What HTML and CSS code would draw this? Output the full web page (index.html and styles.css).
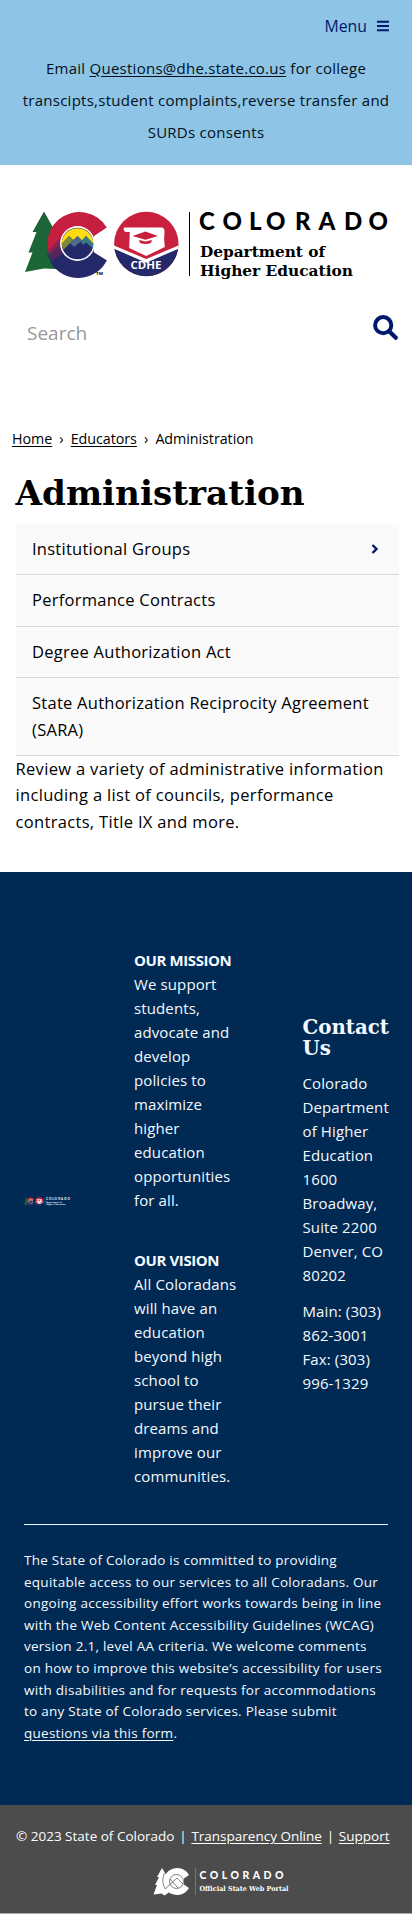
FILE: index.html
```html
<!DOCTYPE html>
<html lang="en">
<head>
<meta charset="utf-8">
<meta name="viewport" content="width=device-width">
<title>Administration</title>
<link rel="stylesheet" href="styles.css">
</head>
<body>
<div class="topbar">
  <div class="menu">Menu
    <svg class="burger" viewBox="0 0 12 12"><path d="M0 1.700h12M0 6h12M0 10.300h12" stroke="currentColor" stroke-width="2"/></svg>
  </div>
  <p class="notice"><span class="line">Email <a href="#">Questions@dhe.state.co.us</a> for college</span><span class="line">transcipts,student complaints,reverse transfer and</span><span class="line">SURDs consents</span></p>
</div>
<header class="header">
  <svg class="logo" viewBox="24 210 365 70">
    <defs>
      <g id="brand">
        <path d="M44 211.500L32.500 232h4l-8 20.500h4L25 272l19-3.500L80 270 60 240z" fill="#1b6537"/>
        <path d="M106.800 227.500A32 32 0 1 0 106.800 260.500L94 252.500V236z" fill="#c41f3e"/>
        <path d="M50.500 262A32 32 0 0 0 106.800 260.500L94 252.500H64z" fill="#24296a"/>
        <path d="M46 253l17-18 7 17-17 15z" fill="#24296a" opacity=".35"/>
        <path d="M48 256l10-10 6 6-12 12z" fill="#24296a" opacity=".55"/>
        <circle cx="77.500" cy="243.500" r="17.400" fill="#fff"/>
        <circle cx="77.500" cy="243.500" r="15.800" fill="#24296a"/>
        <path d="M61.700 244A15.800 15.800 0 0 1 93.300 244L86 236l-4 4.500-4.500-4.500-4 4-4.500-4z" fill="#ffdc10"/>
        <path d="M61.800 243.500L69 236l4.500 4-10.500 10z" fill="#7f8a38"/>
        <path d="M81 241.500l5-5.500 7.200 7.500-.2 5-7-6-3 2.500z" fill="#377b87"/>
        <path d="M70 243.500l7.500-7.500 5 5-5 3-3 3z" fill="#4d6a8b"/>
        <circle cx="146.300" cy="243.900" r="32.200" fill="#c9203e"/>
        <path d="M114.200 246.500l32 15.500 32.200-15.500A32.200 32.200 0 0 1 114.200 246.500z" fill="#24296a"/>
        <path d="M114 245.500l32.200 13.500 32.300-13.500v3.200l-32.300 14-32.200-14z" fill="#fff"/>
        <path d="M126 227.500h35.500q3 0 3 4-1 8 .3 15.500l-18.600 9-17-8 .6-16h-4.500q-3-3-1-4.500z" fill="#fff"/>
        <path d="M132.500 236l13-4.500 12.500 4.500-12.500 3.800zM139 240l6.500 1.500 6.500-1.500-1 3q-5.500 2-11 0z" fill="#c9203e"/>
        <text x="130.500" y="268.500" textLength="31" lengthAdjust="spacingAndGlyphs" class="seal">CDHE</text>
        <text x="96" y="275" textLength="7" lengthAdjust="spacingAndGlyphs" class="tm">TM</text>
        <path d="M189.500 212v64" stroke="currentColor"/>
        <text x="199 222.500 249 266 295 318.500 344 368.500" y="229.700" class="state">COLORADO</text>
        <text x="200" y="257" textLength="125" lengthAdjust="spacingAndGlyphs" class="dept">Department of</text>
        <text x="200" y="275.500" textLength="153" lengthAdjust="spacingAndGlyphs" class="dept">Higher Education</text>
      </g>
    </defs>
    <use href="#brand"/>
  </svg>
  <div class="search">
    <span class="placeholder">Search</span>
    <svg class="glass" viewBox="0 0 25 25"><circle cx="10.200" cy="10.200" r="8.100" fill="none" stroke="currentColor" stroke-width="4"/><path d="M16.200 16.200l6.600 6.600" stroke="currentColor" stroke-width="4.200" stroke-linecap="round"/></svg>
  </div>
</header>
<nav class="crumbs"><a href="#">Home</a><span class="sep">›</span><a href="#">Educators</a><span class="sep">›</span><span>Administration</span></nav>
<main>
  <h1>Administration</h1>
  <ul class="subnav">
    <li>Institutional Groups<svg class="chev" viewBox="0 0 8 10"><path d="M1.500 1l4 4-4 4" fill="none" stroke="currentColor" stroke-width="2.400"/></svg></li>
    <li>Performance Contracts</li>
    <li>Degree Authorization Act</li>
    <li><span>State Authorization Reciprocity Agreement<br>(SARA)</span></li>
  </ul>
  <p class="intro">Review a variety of administrative information<br>including a list of councils, performance<br>contracts, Title IX and more.</p>
</main>
<footer>
  <div class="about">
    <svg class="minilogo" viewBox="24 210 365 70"><use href="#brand"/></svg>
    <div class="mission">
      <p><b>OUR MISSION</b><br>We support<br>students,<br>advocate and<br>develop<br>policies to<br>maximize<br>higher<br>education<br>opportunities<br>for all.</p>
      <p><b>OUR VISION</b><br>All Coloradans<br>will have an<br>education<br>beyond high<br>school to<br>pursue their<br>dreams and<br>improve our<br>communities.</p>
    </div>
    <div class="contact">
      <h2>Contact<br>Us</h2>
      <p>Colorado<br>Department<br>of Higher<br>Education<br>1600<br>Broadway,<br>Suite 2200<br>Denver, CO<br>80202</p>
      <p>Main: (303)<br>862-3001<br>Fax: (303)<br>996-1329</p>
    </div>
  </div>
  <p class="access">The State of Colorado is committed to providing<br>equitable access to our services to all Coloradans. Our<br>ongoing accessibility effort works towards being in line<br>with the Web Content Accessibility Guidelines (WCAG)<br>version 2.1, level AA criteria. We welcome comments<br>on how to improve this website’s accessibility for users<br>with disabilities and for requests for accommodations<br>to any State of Colorado services. Please submit<br><a href="#">questions via this form</a>.</p>
</footer>
<div class="legal">
  <div class="links"><span>© 2023 State of Colorado</span><span>|</span><a href="#">Transparency Online</a><span>|</span><a href="#">Support</a></div>
  <svg class="portal" viewBox="152 1866 137 31">
    <path d="M161 1868l-5 9h2l-4 8h2l-3.500 9.500 8-1 3 2 10-7z" fill="#fff"/>
    <path d="M188 1875A13.500 13.500 0 1 0 188 1888l-5-3.500v-6z" fill="#fff"/>
    <g fill="none" stroke="#4c4c4c" stroke-width=".7"><circle cx="175.500" cy="1881.500" r="7"/><path d="M163.500 1873q-4 9 1 16M164 1889l12-11 6 6M169 1879l8 9"/></g>
    <path d="M194.500 1868v27" stroke="#888" stroke-width=".7"/>
    <text x="198.500" y="1879.300" textLength="84" class="ptitle">COLORADO</text>
    <text x="198.500" y="1891" textLength="89" lengthAdjust="spacingAndGlyphs" class="psub">Official State Web Portal</text>
  </svg>
</div>
</body>
</html>
```
FILE: styles.css
```css
* { box-sizing: border-box; }
body { margin: 0; background: #fff; color: #000; font-family: "Trebuchet MS", "Open Sans", sans-serif; white-space: nowrap; }
p, h1, h2, ul { margin: 0; padding: 0; }
a { color: inherit; text-decoration: underline; text-underline-offset: 2px; }
svg { display: block; overflow: visible; }

.topbar { height: 165px; background: #8ec4e5; padding-top: 11px; color: #02101c; }
.menu { display: flex; justify-content: flex-end; align-items: center; gap: 10px; height: 30px; padding-right: 23px; color: #001970; font-size: 15.800px; }
.burger { width: 12px; height: 12px; }
.notice { margin-top: 11px; font-size: 15px; line-height: 32px; text-align: center; letter-spacing: .26px; }
.line { display: block; }

.header { height: 254px; padding: 45px 24px 0; }
.logo { width: 365px; height: 70px; color: #000; }
.seal { font: 700 10.500px "Open Sans", sans-serif; fill: #fff; }
.tm { font: 700 4px "Open Sans", sans-serif; }
.state { font: 900 24px Lato, sans-serif; fill: currentColor; }
.dept { font: 700 15.500px "DejaVu Serif", serif; fill: currentColor; }
.search { display: flex; justify-content: space-between; padding-top: 35px; margin-right: -9.500px; }
.placeholder { padding-left: 3px; margin-top: 3px; font-size: 19px; line-height: 30px; color: #979797; }
.glass { width: 25px; height: 25px; color: #001970; }

.crumbs { display: flex; height: 42px; padding: 8px 12px; font-size: 14.300px; line-height: 24px; letter-spacing: -.05px; }
.sep { width: 18.500px; text-align: center; }
main { height: 411px; padding: 8px 13px 0 15.500px; }
h1 { height: 55px; font: 700 34.200px/48px "DejaVu Serif", serif; }
.subnav { list-style: none; letter-spacing: .26px; }
.subnav li { display: flex; align-items: center; justify-content: space-between; height: 51.500px; padding: 0 20px 0 16.500px; background: #fafafa; border-bottom: 1px solid #d8d8d8; font-size: 16.500px; line-height: 26.400px; }
.subnav li:first-child { height: 51px; }
.subnav li:last-child { height: 78px; }
.chev { width: 8px; height: 10px; color: #001970; }
.intro { font-size: 16.500px; line-height: 26.400px; letter-spacing: .33px; }

footer { height: 933px; background: #002a54; color: #f4f9ff; padding: 76px 24px 0; }
.about { display: grid; grid-template-columns: 110px 168.500px 1fr; align-items: center; height: 577px; border-bottom: 1px solid #e8f4ff; font-size: 15px; line-height: 24px; letter-spacing: .12px; padding-bottom: 36px; }
.minilogo { width: 46px; height: 9px; margin-top: -34px; }
.mission { align-self: start; }
.mission b { letter-spacing: -.4px; }
.mission p + p { margin-top: 36px; }
.contact { align-self: start; padding-top: 69px; }
h2 { margin-bottom: 12px; font: 700 19.800px/21px "DejaVu Serif", serif; letter-spacing: 0; }
.contact p + p { margin-top: 12px; }
.access { padding-top: 25px; font-size: 13.500px; line-height: 21.600px; letter-spacing: .26px; }

.legal { height: 109px; background: #4c4c4c; color: #fff; padding-top: 19px; border-bottom: 1px solid #aaa; }
.links { display: flex; justify-content: space-between; padding: 0 22.500px 0 16px; font-size: 13.500px; line-height: 24px; }
.portal { width: 137px; height: 31px; margin: 18px 0 0 153px; }
.ptitle { font: 900 10.500px Lato, sans-serif; fill: #fff; }
.psub { font: 700 7px "DejaVu Serif", serif; fill: #fff; }
```
